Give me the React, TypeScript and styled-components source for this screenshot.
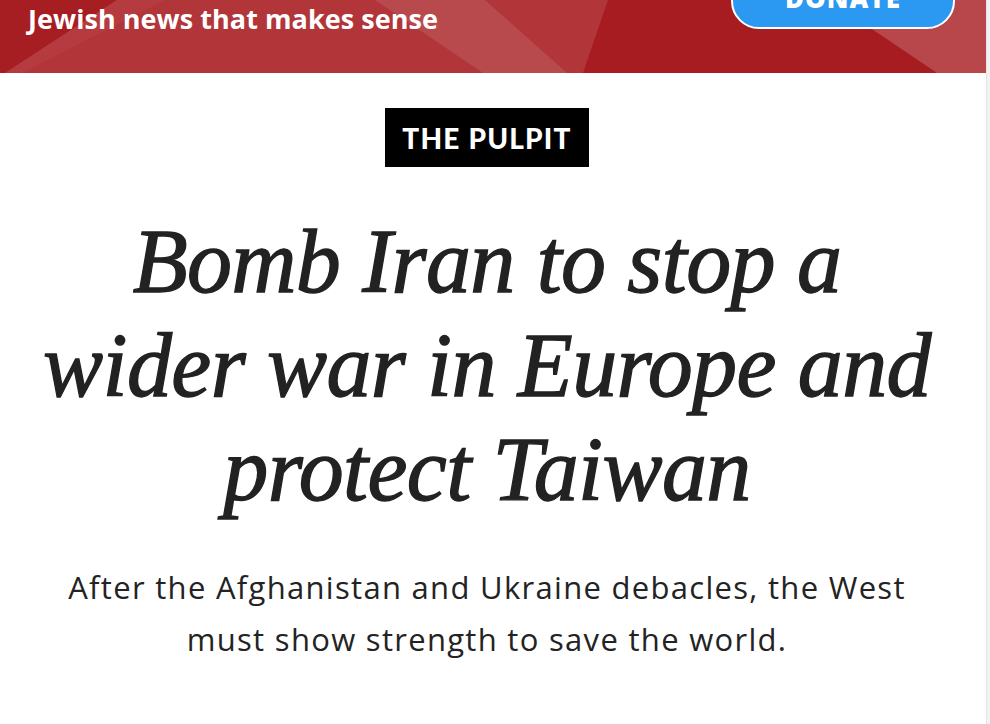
import React from 'react';
import styled, {createGlobalStyle} from 'styled-components';

const GlobalStyle = createGlobalStyle`
  html, body {
    margin: 0;
    padding: 0;
    background: #fff;
  }
  body {
    font-family: "Open Sans", "Liberation Sans", sans-serif;
    overflow: hidden;
  }
`;

const Page = styled.div`
  display: flex;
  width: 990px;
  height: 724px;
  overflow: hidden;
`;

const Main = styled.div`
  flex: 1;
  display: flex;
  flex-direction: column;
  background: #fff;
`;

// thin strip on the right edge, like a window border
const ScrollTrack = styled.div`
  width: 3px;
  background: #f2f2f2;
  border-left: 1px solid #e4e4e4;
`;

const Header = styled.header`
  position: relative;
  height: 73px;
  display: flex;
  align-items: flex-start;
  justify-content: space-between;
  background: #b2353a;
  overflow: hidden;
`;

// background facets of the banner
const Facets = styled.svg`
  position: absolute;
  inset: 0;
  width: 100%;
  height: 100%;
`;

const Tagline = styled.div`
  position: relative;
  padding: 1px 0 0 28px;
  color: #fff;
  font-family: "Open Sans", sans-serif;
  font-weight: 700;
  font-size: 27px;
  line-height: 36px;
  letter-spacing: 0.05px;
`;

const DonateButton = styled.button`
  position: relative;
  margin: -27px 31px 0 0;
  width: 224px;
  height: 56px;
  border: 2px solid #fff;
  border-radius: 28px;
  background: #2b98f2;
  color: #fff;
  font-family: "Open Sans", sans-serif;
  font-weight: 800;
  font-size: 26px;
  letter-spacing: 1px;
  padding: 0 0 6px;
  cursor: pointer;
`;

const Article = styled.article`
  display: flex;
  flex-direction: column;
  align-items: center;
  padding: 35px 24px 0 12px;
  text-align: center;
`;

const Kicker = styled.div`
  background: #000;
  color: #fff;
  width: 204px;
  height: 59px;
  display: flex;
  align-items: center;
  justify-content: center;
  font-family: Lato, sans-serif;
  font-weight: 900;
  font-size: 28px;
  letter-spacing: 1.2px;
`;

const Headline = styled.h1`
  margin: 43px 0 0;
  color: #222;
  font-family: "Liberation Serif", serif;
  font-style: italic;
  font-weight: 400;
  font-size: 90px;
  line-height: 104px;
  letter-spacing: -0.6px;
  -webkit-text-stroke: 1.3px #222;
`;

const Dek = styled.p`
  margin: 39px 0 0;
  color: #232323;
  font-family: "Open Sans", sans-serif;
  font-weight: 400;
  font-size: 31px;
  line-height: 52px;
  letter-spacing: 1.3px;
`;

export default function App() {
  return (
    <Page>
      <GlobalStyle/>
      <Main>
        <Header>
          <Facets viewBox="0 0 986 73" preserveAspectRatio="none">
            <polygon points="0,0 117,0 5,73 0,73" fill="#a61d22"/>
            <polygon points="117,0 165,0 22,73 5,73" fill="#b53b40"/>
            <polygon points="375,0 485,0 567,73 483,73" fill="#b84a4d"/>
            <polygon points="608,0 986,0 986,73 583,73" fill="#a61c20"/>
            <polygon points="829,0 986,0 986,73 937,73" fill="#b7474a"/>
          </Facets>
          <Tagline>Jewish news that makes sense</Tagline>
          <DonateButton>DONATE</DonateButton>
        </Header>
        <Article>
          <Kicker>THE PULPIT</Kicker>
          <Headline>
            Bomb Iran to stop a<br/>
            wider war in Europe and<br/>
            protect Taiwan
          </Headline>
          <Dek>
            After the Afghanistan and Ukraine debacles, the West<br/>
            must show strength to save the world.
          </Dek>
        </Article>
      </Main>
      <ScrollTrack/>
    </Page>
  );
}
